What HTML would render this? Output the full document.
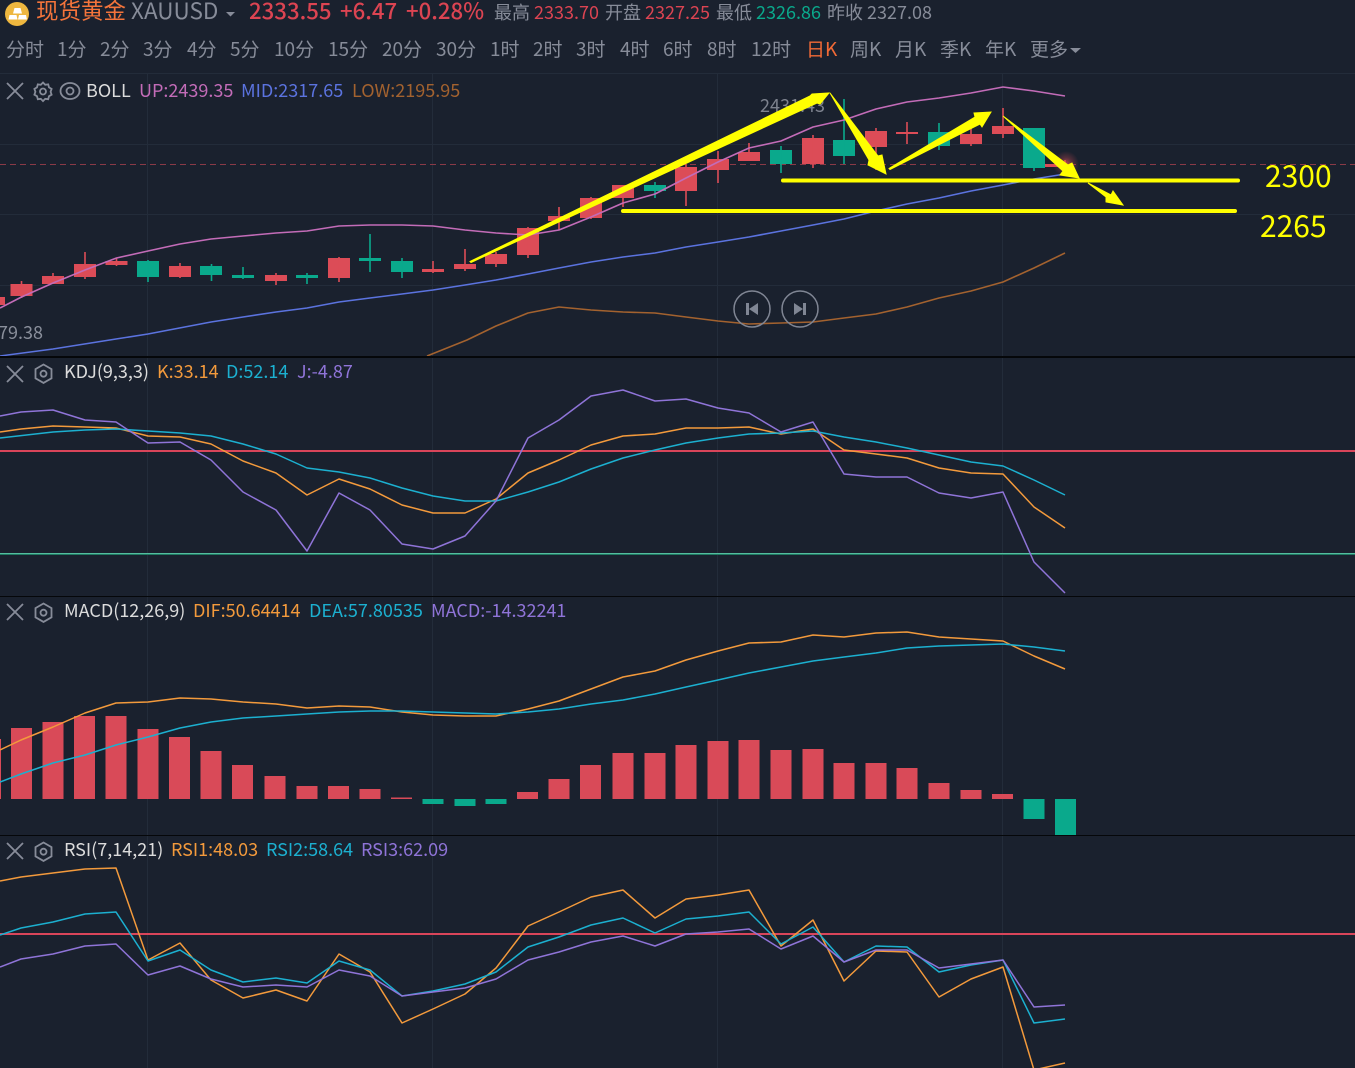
<!DOCTYPE html>
<html><head><meta charset="utf-8"><style>
html,body{margin:0;padding:0;background:#1a212e;width:1355px;height:1068px;overflow:hidden}
svg{display:block}
text{font-family:"Noto Sans CJK SC","Liberation Sans",sans-serif;white-space:pre}
.t{font-size:19px;fill:#878c99}
.i{font-size:18px;fill:#878c99}
.l{font-size:18px}
</style></head><body>
<svg width="1355" height="1068" viewBox="0 0 1355 1068" xmlns="http://www.w3.org/2000/svg">
<rect width="1355" height="1068" fill="#1a212e"/>
<!-- grid -->
<path d="M0 144.5H1355M0 214.5H1355M0 285.5H1355M0 73.5H1355M147.5 74V1068M432.5 74V1068M717.5 74V1068M1002.5 74V1068" stroke="#232c3a" stroke-width="1" fill="none"/>
<path d="M0 164.5H1355" stroke="#8a3a47" stroke-width="1" stroke-dasharray="6 4" fill="none"/>
<!-- header -->
<circle cx="17" cy="14" r="12" fill="#eeb73f"/>
<path d="M14.500 8h6l1.500 5.500H13zM9.500 15h7l1 4.500H8.500zM19 15h7l1 4.500H18z" fill="#fff"/>
<text x="36" y="19" font-size="22.500" fill="#f4743b">现货黄金</text>
<text x="131" y="19" font-size="22.500" fill="#878c99">XAUUSD</text>
<path d="M226 12h9l-4.500 4.500z" fill="#878c99"/>
<text x="249" y="19" font-size="22.200" fill="#dc4452" style="font-weight:500">2333.55</text>
<text x="340" y="19" font-size="22.200" fill="#dc4452" style="font-weight:500">+6.47</text>
<text x="406" y="19" font-size="22.200" fill="#dc4452" style="font-weight:500">+0.28%</text>
<text x="494" y="19" class="i">最高</text>
<text x="534" y="19" class="i" style="fill:#dc4452">2333.70</text>
<text x="605" y="19" class="i">开盘</text>
<text x="645" y="19" class="i" style="fill:#dc4452">2327.25</text>
<text x="716" y="19" class="i">最低</text>
<text x="756" y="19" class="i" style="fill:#0aa98c">2326.86</text>
<text x="827" y="19" class="i">昨收</text>
<text x="867" y="19" class="i">2327.08</text>
<text x="6" y="56" class="t">分时</text><text x="57" y="56" class="t">1分</text><text x="100" y="56" class="t">2分</text><text x="143" y="56" class="t">3分</text><text x="187" y="56" class="t">4分</text><text x="230" y="56" class="t">5分</text><text x="274" y="56" class="t">10分</text><text x="328" y="56" class="t">15分</text><text x="382" y="56" class="t">20分</text><text x="436" y="56" class="t">30分</text><text x="490" y="56" class="t">1时</text><text x="533" y="56" class="t">2时</text><text x="576" y="56" class="t">3时</text><text x="620" y="56" class="t">4时</text><text x="663" y="56" class="t">6时</text><text x="707" y="56" class="t">8时</text><text x="751" y="56" class="t">12时</text>
<text x="806" y="56" class="t" style="fill:#f26a36">日K</text><text x="850" y="56" class="t">周K</text><text x="895" y="56" class="t">月K</text><text x="940" y="56" class="t">季K</text><text x="985" y="56" class="t">年K</text><text x="1030" y="56" class="t">更多</text>
<path d="M1070 48h11l-5.500 5z" fill="#878c99"/>
<!-- BOLL legend -->
<g fill="none" stroke="#878c99" stroke-width="1.800">
<path d="M7 83L23 99M23 83L7 99"/>
<path d="M43 82.500l2.200 2.300 3-.4.800 3 2.600 1.500-1 2.900 1 2.900-2.600 1.500-.8 3-3-.4-2.200 2.300-2.200-2.300-3 .4-.8-3-2.600-1.500 1-2.900-1-2.900 2.600-1.500.8-3 3 .4z"/>
<circle cx="43" cy="91.500" r="3"/>
<ellipse cx="70" cy="91" rx="9.500" ry="8"/>
<circle cx="70" cy="91" r="3.500"/>
<path d="M7 366L23 382M23 366L7 382"/>
<path d="M43.500 364.500l8 4.600v9.200l-8 4.600-8-4.600v-9.200z"/><circle cx="43.500" cy="373.700" r="3"/>
<path d="M7 604L23 620M23 604L7 620"/>
<path d="M43.500 603.500l8 4.600v9.200l-8 4.600-8-4.600v-9.200z"/><circle cx="43.500" cy="612.700" r="3"/>
<path d="M7 843L23 859M23 843L7 859"/>
<path d="M43.500 842.500l8 4.600v9.200l-8 4.600-8-4.600v-9.200z"/><circle cx="43.500" cy="851.700" r="3"/>
</g>
<text x="86" y="97" class="l" fill="#dcdcdc">BOLL</text>
<text x="139" y="97" class="l" fill="#c36cb8">UP:2439.35</text>
<text x="241" y="97" class="l" fill="#5b73df">MID:2317.65</text>
<text x="352" y="97" class="l" fill="#a3622f">LOW:2195.95</text>
<text x="760" y="112" class="l" fill="#7d828e">2431.43</text>
<text x="-2" y="339" class="l" fill="#8a8f9b">79.38</text>
<!-- candles red -->
<path fill="#dc4c57" d="M-10 297h15v8h-15zM10.500 284h22v12h-22zM42 276h22v8H42zM74 264h22v13H74zM105.500 261h22v4h-22zM169 266h22v11h-22zM265 275h22v6h-22zM328 258h22v20h-22zM422 269h22v3h-22zM454 264h22v5h-22zM485 254h22v10h-22zM517 228h22v27h-22zM548 216h22v5h-22zM580 198h22v20h-22zM612 185h22v13h-22zM675 167h22v24h-22zM707 159h22v11h-22zM738 152h22v9h-22zM802 138h22v26h-22zM865 131h22v16h-22zM896 132h22v2h-22zM960 134h22v10h-22zM992 126h22v8h-22zM1042 164h22v3h-22z"/>
<path stroke="#dc4c57" stroke-width="1.600" fill="none" d="M21.500 281v17M53 273v11M85 252v27M116.500 258v8M180 263v15M276 273v12M339 257v25M433 261v12M465 249v22M496 252v15M528 227v31M559 207v23M591 197v22M623 185v22M686 164v42M718 151v32M749 143v18M813 135v33M876 128v42M907 122v22M971 128v18M1003 108v30M1065 160v8"/>
<!-- candles green -->
<path fill="#0aa98c" d="M137 261h22v16h-22zM200 266h22v9h-22zM232 275h22v3h-22zM296 275h22v3h-22zM359 258h22v3h-22zM391 261h22v11h-22zM644 185h22v6h-22zM770 150h22v14h-22zM833 140h22v16h-22zM928 132h22v14h-22zM1023 128h22v40h-22z"/>
<path stroke="#0aa98c" stroke-width="1.600" fill="none" d="M148 260v22M211.500 264v17M243 267v12M307 273v11M370 234v38M402 258v20M655 182v16M781 146v27M844 99v65M939 123v27M1034 168v3"/>
<defs><radialGradient id="g"><stop offset="0" stop-color="#ff5a5a" stop-opacity=".75"/><stop offset=".5" stop-color="#d24c55" stop-opacity=".3"/><stop offset="1" stop-color="#d24c55" stop-opacity="0"/></radialGradient></defs>
<circle cx="1066" cy="164" r="13" fill="url(#g)"/>
<!-- BOLL lines -->
<g fill="none" stroke-width="1.600" stroke-linejoin="round">
<polyline stroke="#c36cb8" points="0,308 21.500,297 53,283 85,270 116.500,258 148,251 180,244 211,239 243,236 276,233 307,231 339,226 370,225 402,225 433,226 465,230 496,233 528,235 559,230 591,217 623,203 655,194 686,178 718,162 749,148 781,141 813,127 844,120 876,109 907,102 939,98 971,93 1003,87 1034,91 1065,96"/>
<polyline stroke="#5b73df" points="0,356 53,349 116,339 148,334 211,322 243,317 276,312 307,308 339,302 370,298 402,294 433,290 465,285 496,280 528,274 559,268 591,262 623,257 655,253 686,247 718,242 749,237 781,231 813,225 844,219 876,211 907,204 939,198 971,191 1003,185 1034,179 1065,174"/>
<polyline stroke="#a3622f" points="427,356 467,340 496,326 528,313 559,307 591,310 623,312 655,313 686,317 718,321 749,324 781,323 813,322 844,318 876,314 907,307 939,298 971,291 1003,282 1034,268 1065,253"/>
</g>
<!-- replay buttons -->
<g fill="none" stroke="#808694" stroke-width="1.500"><circle cx="752" cy="309" r="18"/><circle cx="800" cy="309" r="18"/></g>
<path fill="#808694" d="M746 303h3v12h-3zM749 309l9-6v12zM806 303h-3v12h3zM803 309l-9-6v12z"/>
<!-- separators -->
<path d="M0 357H1355" stroke="#05070a" stroke-width="2" fill="none"/>
<path d="M0 596.500H1355M0 835.500H1355" stroke="#05070a" stroke-width="1" fill="none"/>
<!-- KDJ -->
<text x="64" y="378" class="l" fill="#dcdcdc">KDJ(9,3,3)</text>
<text x="157" y="378" class="l" fill="#f39a3c">K:33.14</text>
<text x="226" y="378" class="l" fill="#1cb0d0">D:52.14</text>
<text x="297" y="378" class="l" fill="#8f74d8">J:-4.87</text>
<path d="M0 451H1355" stroke="#d9455a" stroke-width="2"/>
<path d="M0 553.500H1355" stroke="#55bd9f" stroke-width="1"/>
<path d="M0 554.500H1355" stroke="#1f7a62" stroke-width="1"/>
<g fill="none" stroke-width="1.500" stroke-linejoin="round">
<polyline stroke="#f39a3c" points="0,432 21,429 53,426 85,427 116,428 148,436 180,437 211,444 243,461 276,473 307,495 339,479 370,489 402,505 433,513 465,513 496,499 528,473 559,460 591,445 623,436 655,434 686,428 718,428 749,427 781,434 813,429 844,450 876,454 907,458 939,468 971,473 1003,474 1034,507 1065,528"/>
<polyline stroke="#1cb0d0" points="0,438 53,432 85,430 116,429 148,431 180,433 211,436 243,444 276,454 307,468 339,472 370,478 402,488 433,496 465,501 496,501 528,492 559,482 591,469 623,458 655,450 686,443 718,438 749,434 781,433 813,431 844,437 876,442 907,448 939,455 971,462 1003,466 1034,480 1065,495"/>
<polyline stroke="#8f74d8" points="0,416 21,412 53,410 85,420 116,422 148,443 180,442 211,460 243,492 276,510 307,551 339,493 370,510 402,544 433,549 465,536 496,501 528,438 559,420 591,396 623,390 655,401 686,399 718,408 749,413 781,432 813,422 844,474 876,477 907,477 939,493 971,498 1003,492 1034,562 1065,593"/>
</g>
<!-- MACD -->
<text x="64" y="617" class="l" fill="#dcdcdc">MACD(12,26,9)</text>
<text x="193" y="617" class="l" fill="#f39a3c">DIF:50.64414</text>
<text x="309" y="617" class="l" fill="#1cb0d0">DEA:57.80535</text>
<text x="431" y="617" class="l" fill="#8f74d8">MACD:-14.32241</text>
<path fill="#d94a58" d="M0 739h1v60H0zM11 728h21v71H11zM42.500 722h21v77h-21zM74 716h21v83H74zM105.500 716h21v83h-21zM137.500 729h21v70h-21zM169 737h21v62h-21zM200.500 751h21v48h-21zM232 765h21v34h-21zM264.500 776h21v23h-21zM296.500 786h21v13h-21zM328 786h21v13h-21zM359.500 789h21v10h-21zM391 797.500h21v1.500h-21zM517 792h21v7h-21zM548.500 779h21v20h-21zM580 765h21v34h-21zM612.500 753h21v46h-21zM644.500 753h21v46h-21zM675.500 745h21v54h-21zM707.500 741h21v58h-21zM738.500 740h21v59h-21zM770.500 750h21v49h-21zM802.500 749h21v50h-21zM833.500 763h21v36h-21zM865.500 763h21v36h-21zM896.500 768h21v31h-21zM928.500 783h21v16h-21zM960.500 790h21v9h-21zM992 794h21v5h-21z"/>
<path fill="#0aa98c" d="M422.500 799h21v5h-21zM454.500 799h21v7h-21zM485.500 799h21v5h-21zM1023.500 799h21v20h-21zM1055 799h21v36h-21z"/>
<g fill="none" stroke-width="1.500" stroke-linejoin="round">
<polyline stroke="#f39a3c" points="0,750 21,740 53,727 85,713 116,703 148,702 180,698 211,699 243,702 276,704 307,708 339,706 370,707 402,712 433,715 465,716 496,716 528,709 559,701 591,689 623,677 655,671 686,660 718,651 749,643 781,642 813,635 844,637 876,633 907,632 939,637 971,639 1003,641 1034,656 1065,669"/>
<polyline stroke="#1cb0d0" points="0,782 21,774 53,763 85,755 116,745 148,737 180,728 211,722 243,718 276,716 307,714 339,712 370,711 402,711 433,712 465,713 496,714 528,712 559,709 591,704 623,700 655,694 686,687 718,680 749,673 781,667 813,661 844,657 876,653 907,648 939,646 971,645 1003,644 1034,647 1065,651"/>
</g>
<!-- RSI -->
<text x="64" y="856" class="l" fill="#dcdcdc">RSI(7,14,21)</text>
<text x="171" y="856" class="l" fill="#f39a3c">RSI1:48.03</text>
<text x="266" y="856" class="l" fill="#1cb0d0">RSI2:58.64</text>
<text x="361" y="856" class="l" fill="#8f74d8">RSI3:62.09</text>
<path d="M0 934H1355" stroke="#d9455a" stroke-width="2"/>
<g fill="none" stroke-width="1.500" stroke-linejoin="round">
<polyline stroke="#f39a3c" points="0,881 21,877 53,873 85,869 116,868 148,960 180,943 211,980 243,998 276,990 307,1001 339,954 370,972 402,1023 433,1009 465,994 496,968 528,926 559,912 591,897 623,890 655,918 686,899 718,895 749,890 781,946 813,920 844,981 876,951 907,952 939,997 971,979 1003,967 1034,1070 1065,1063"/>
<polyline stroke="#1cb0d0" points="0,935 21,928 53,922 85,914 116,912 148,961 180,950 211,970 243,982 276,978 307,983 339,961 370,970 402,996 433,991 465,984 496,972 528,947 559,937 591,925 623,918 655,933 686,919 718,916 749,912 781,944 813,927 844,962 876,946 907,947 939,972 971,965 1003,960 1034,1023 1065,1019"/>
<polyline stroke="#8f74d8" points="0,967 21,959 53,954 85,946 116,944 148,975 180,966 211,979 243,987 276,985 307,987 339,970 370,976 402,996 433,992 465,988 496,979 528,960 559,952 591,942 623,936 655,946 686,934 718,932 749,929 781,949 813,936 844,962 876,950 907,950 939,968 971,964 1003,960 1034,1007 1065,1005"/>
</g>
<!-- yellow annotations -->
<g fill="#ffff00" stroke="#ffff00" stroke-width="1" stroke-linejoin="miter">
<polygon points="470,261.500 810,96 812,94 829,93 820,104 817,103 471,262.500"/>
<polygon points="830,93 878,156 882,155 886,174 868,165 869,160"/>
<polygon points="889,168.500 975,117 974,113 991,112 982,127 980,124 890,169.500"/>
<polygon points="1003,116 1068,165 1072,163 1079,178 1060,175 1063,171"/>
<polygon points="1088,183 1111,195 1113,191 1123,205 1106,202 1106,197"/>
</g>
<path d="M783 180.500H1238M623 211H1235" stroke="#ffff00" stroke-width="4" stroke-linecap="round" fill="none"/>
<text x="1265" y="187" font-size="30" fill="#ffff00">2300</text>
<text x="1260" y="237" font-size="30" fill="#ffff00">2265</text>
</svg>
</body></html>
